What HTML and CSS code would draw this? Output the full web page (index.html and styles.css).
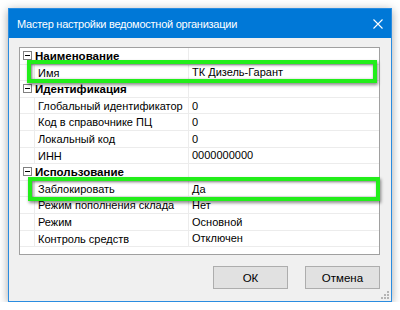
FILE: index.html
```html
<!DOCTYPE html>
<html lang="ru">
<head>
<meta charset="utf-8">
<link rel="stylesheet" href="styles.css">
</head>
<body>
<div class="window">
  <div class="titlebar">
    <span class="title">Мастер настройки ведомостной организации</span>
    <svg class="close" width="10" height="10" viewBox="0 0 10 10"><path d="M0.5 0.5 L9.5 9.5 M9.5 0.5 L0.5 9.5" stroke="#fff" stroke-width="1.1" fill="none"/></svg>
  </div>
  <div class="content">
    <div class="grid">
      <div class="row cat"><span class="exp"></span><span class="catname">Наименование</span><span class="catval"></span></div>
      <div class="row prop"><span class="gut"></span><span class="name">Имя</span><span class="val">ТК Дизель-Гарант</span></div>
      <div class="row cat"><span class="exp"></span><span class="catname">Идентификация</span><span class="catval"></span></div>
      <div class="row prop"><span class="gut"></span><span class="name">Глобальный идентификатор</span><span class="val">0</span></div>
      <div class="row prop"><span class="gut"></span><span class="name">Код в справочнике ПЦ</span><span class="val">0</span></div>
      <div class="row prop"><span class="gut"></span><span class="name">Локальный код</span><span class="val">0</span></div>
      <div class="row prop"><span class="gut"></span><span class="name">ИНН</span><span class="val">0000000000</span></div>
      <div class="row cat"><span class="exp"></span><span class="catname">Использование</span><span class="catval"></span></div>
      <div class="row prop"><span class="gut"></span><span class="name">Заблокировать</span><span class="val">Да</span></div>
      <div class="row prop"><span class="gut"></span><span class="name">Режим пополнения склада</span><span class="val">Нет</span></div>
      <div class="row prop"><span class="gut"></span><span class="name">Режим</span><span class="val">Основной</span></div>
      <div class="row prop"><span class="gut"></span><span class="name">Контроль средств</span><span class="val">Отключен</span></div>
      <div class="hl hl1"></div>
      <div class="hl hl2"></div>
    </div>
    <div class="buttons">
      <button class="btn">ОК</button>
      <button class="btn">Отмена</button>
    </div>
    <div class="grip">
      <svg width="8" height="8" viewBox="0 0 8 8"><g fill="#b5b5b5"><rect x="6" y="0" width="2" height="2"/><rect x="3" y="3" width="2" height="2"/><rect x="6" y="3" width="2" height="2"/><rect x="0" y="6" width="2" height="2"/><rect x="3" y="6" width="2" height="2"/><rect x="6" y="6" width="2" height="2"/></g></svg>
    </div>
  </div>
</div>
</body>
</html>
```
FILE: styles.css
```css
html, body {
  margin: 0;
  padding: 0;
  background: #ffffff;
}
body {
  font-family: "Liberation Sans", Arial, sans-serif;
  font-size: 11px;
  color: #000;
}
.window {
  margin: 8px 0 0 8px;
  width: 384px;
  height: 294px;
  box-sizing: border-box;
  border: 1px solid #2a8ce0;
  background: #f0f0f0;
  box-shadow: 0 2px 9px rgba(0,0,0,0.35);
  display: flex;
  flex-direction: column;
}
.titlebar {
  height: 29px;
  background: #0078d7;
  display: flex;
  align-items: center;
  padding: 0 0 0 8px;
  flex-shrink: 0;
}
.title {
  color: #fff;
  font-size: 11px;
  letter-spacing: -0.25px;
  flex: 1;
  white-space: nowrap;
}
.close {
  margin-right: 8px;
}
.content {
  position: relative;
  flex: 1;
  padding: 9px 11px 0 10px;
  display: flex;
  flex-direction: column;
}
.grid {
  position: relative;
  height: 208px;
  box-sizing: border-box;
  border: 1px solid #a0a0a0;
  background: #fff;
}
.row {
  display: flex;
  height: 16.6px;
  box-sizing: border-box;
  align-items: center;
  white-space: nowrap;
}
.prop {
  border-bottom: 1px solid #ececec;
}
.cat {
  border-bottom: 1px solid #ececec;
}
.gut {
  width: 14px;
  height: 100%;
  border-right: 1px solid #ececec;
  flex-shrink: 0;
}
.name {
  width: 150px;
  height: 100%;
  padding-left: 3px;
  line-height: 16px;
  border-right: 1px solid #ececec;
  flex-shrink: 0;
  overflow: hidden;
}
.val {
  padding-left: 3px;
  line-height: 16px;
}
.exp {
  width: 7px;
  height: 7px;
  border: 1px solid #808080;
  margin: 0 3px 0 3px;
  position: relative;
  flex-shrink: 0;
}
.exp::after {
  content: "";
  position: absolute;
  left: 1px;
  right: 1px;
  top: 3px;
  height: 1px;
  background: #000;
}
.catname {
  font-weight: bold;
  font-size: 11.5px;
  width: 153px;
  line-height: 16px;
  height: 100%;
  border-right: 1px solid #ececec;
  flex-shrink: 0;
}
.hl {
  position: absolute;
  border: 4px solid #22ee1a;
  box-shadow: 1px 2px 3px rgba(0,0,0,0.45), inset 1px 1px 3px rgba(0,0,0,0.55);
}
.hl1 {
  left: 7px;
  top: 12px;
  width: 342px;
  height: 15px;
}
.hl2 {
  left: 8px;
  top: 129px;
  width: 344px;
  height: 16px;
}
.buttons {
  display: flex;
  justify-content: flex-end;
  gap: 17px;
  margin-top: 11px;
}
.btn {
  width: 75px;
  height: 23px;
  background: #e1e1e1;
  border: 1px solid #adadad;
  font-family: "Liberation Sans", Arial, sans-serif;
  font-size: 11.5px;
  color: #000;
  padding: 0;
}
.grip {
  position: absolute;
  right: 2px;
  bottom: 2px;
  line-height: 0;
}
```
